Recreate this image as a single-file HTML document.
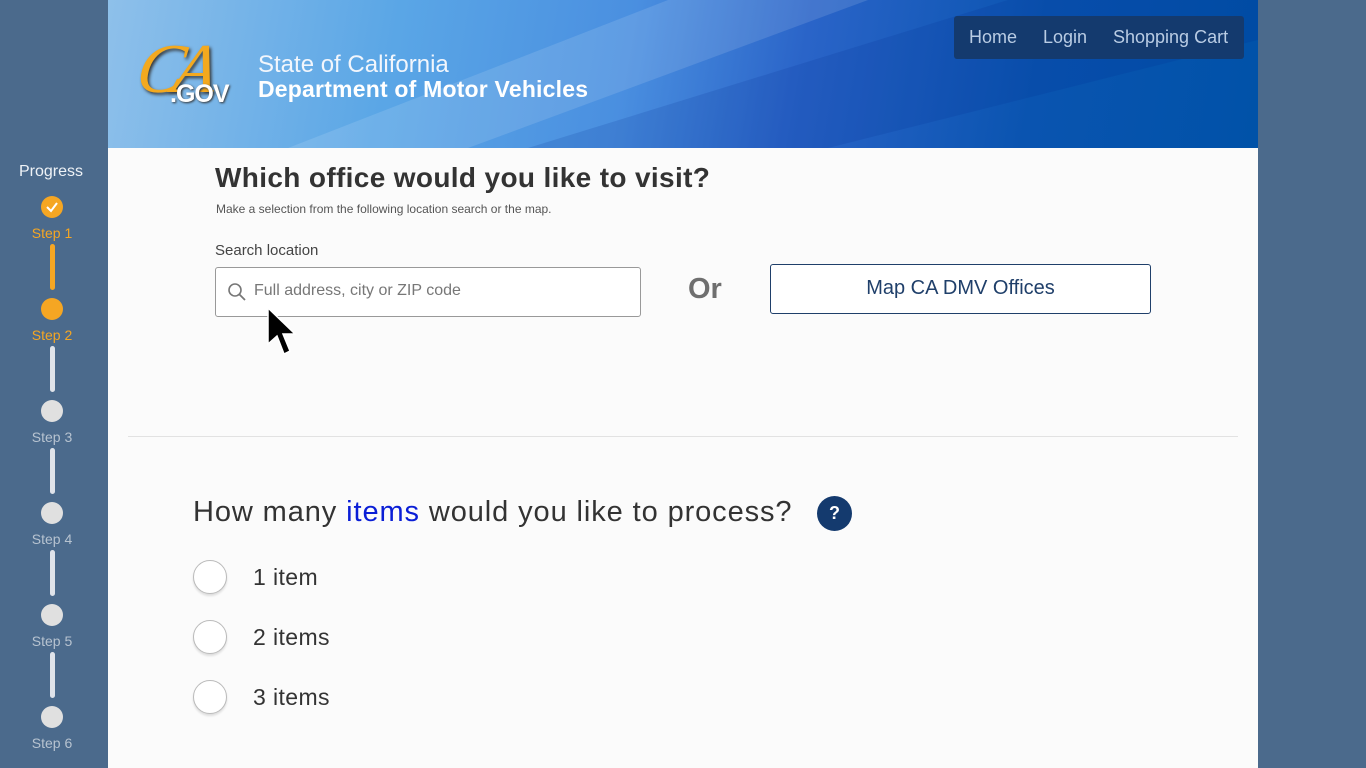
<!DOCTYPE html>
<html><head><meta charset="utf-8">
<style>
*{margin:0;padding:0;box-sizing:border-box}
body{width:1366px;height:768px;overflow:hidden;background:#4b6a8c;font-family:"Liberation Sans",Arial,sans-serif;position:relative}
.abs{position:absolute}
#main{left:108px;top:0;width:1150px;height:768px;background:#fbfbfb}
#hdr{left:108px;top:0;width:1150px;height:148px;overflow:hidden;
background:linear-gradient(100deg,#8ec0ea 0%,#5aa6e6 25%,#4a8fe0 45%,#2a64c8 60%,#0a54b0 80%,#0052a8 100%)}
.step{position:absolute;left:52px;transform:translateX(-50%);text-align:center;font-size:14px;color:#b7c3d0;white-space:nowrap}
.dot{position:absolute;left:41px;width:22px;height:22px;border-radius:50%;background:#e0e0e0}
.ln{position:absolute;left:50px;width:5px;height:46px;border-radius:3px;background:#dfe3ea}
.radio{position:absolute;left:193px;width:34px;height:34px;border-radius:50%;border:1.5px solid #bbb;background:#fff;box-shadow:0 2px 2px rgba(0,0,0,.12)}
.rl{position:absolute;left:253px;font-size:23px;letter-spacing:0.4px;color:#333}
</style></head><body>
<div id="main" class="abs"></div>
<div id="hdr" class="abs">
 <svg class="abs" style="left:0;top:0" width="1150" height="148">
  <polygon points="180,148 560,0 760,0 360,148" fill="rgba(255,255,255,0.12)"/>
  <polygon points="420,148 900,0 1150,0 1150,40 720,148" fill="rgba(0,40,140,0.15)"/>
 </svg>
 <div class="abs" style="left:30px;top:30px;font-family:'Liberation Serif',serif;font-style:italic;font-size:70px;color:#f3a91f;text-shadow:2px 2px 3px #333;letter-spacing:-10px;transform:skewX(-10deg)">CA</div>
 <div class="abs" style="left:62px;top:80px;font-size:25px;color:#fff;font-weight:bold;text-shadow:1px 1px 2px #333;letter-spacing:-1px">.GOV</div>
 <div class="abs" style="left:150px;top:51px;font-size:24px;color:#f2f6fc">State of California</div>
 <div class="abs" style="left:150px;top:76px;font-size:23px;letter-spacing:0.2px;color:#fff;font-weight:bold">Department of Motor Vehicles</div>
 <div class="abs" style="left:846px;top:16px;width:290px;height:43px;background:#143a6e;border-radius:3px;color:#b9cce4;font-size:18px">
  <span class="abs" style="left:15px;top:11px">Home</span>
  <span class="abs" style="left:89px;top:11px">Login</span>
  <span class="abs" style="left:159px;top:11px">Shopping Cart</span>
 </div>
</div>

<div class="abs" style="left:19px;top:163px;font-size:16px;color:#eef2f6">Progress</div>
<div class="dot" style="top:196px;background:#f5a623"></div>
<svg class="abs" style="left:41px;top:196px" width="22" height="22"><path d="M6 11 L10 15 L16 7" stroke="#fff" stroke-width="2" fill="none"/></svg>
<div class="step" style="top:225px;color:#f5a623">Step 1</div>
<div class="ln" style="top:244px;background:#f5a623"></div>
<div class="dot" style="top:298px;background:#f5a623"></div>
<div class="step" style="top:327px;color:#f5a623">Step 2</div>
<div class="ln" style="top:346px"></div>
<div class="dot" style="top:400px"></div>
<div class="step" style="top:429px">Step 3</div>
<div class="ln" style="top:448px"></div>
<div class="dot" style="top:502px"></div>
<div class="step" style="top:531px">Step 4</div>
<div class="ln" style="top:550px"></div>
<div class="dot" style="top:604px"></div>
<div class="step" style="top:633px">Step 5</div>
<div class="ln" style="top:652px"></div>
<div class="dot" style="top:706px"></div>
<div class="step" style="top:735px">Step 6</div>

<div class="abs" style="left:215px;top:162px;font-size:28px;letter-spacing:0.35px;font-weight:bold;color:#333">Which office would you like to visit?</div>
<div class="abs" style="left:216px;top:202px;font-size:12px;color:#555">Make a selection from the following location search or the map.</div>
<div class="abs" style="left:215px;top:242px;font-size:15px;color:#444">Search location</div>
<div class="abs" style="left:215px;top:267px;width:426px;height:50px;border:1px solid #999;border-radius:3px;background:#fff">
 <svg class="abs" style="left:11px;top:14px" width="20" height="20"><circle cx="8" cy="8" r="6" stroke="#777" stroke-width="1.6" fill="none"/><path d="M12.5 12.5 L18 18" stroke="#777" stroke-width="1.8"/></svg>
 <span class="abs" style="left:38px;top:14px;font-size:16px;color:#777">Full address, city or ZIP code</span>
</div>
<div class="abs" style="left:688px;top:273px;font-size:29px;font-weight:bold;color:#6f6f6f">Or</div>
<div class="abs" style="left:770px;top:264px;width:381px;height:50px;border:1.5px solid #1f3f6a;border-radius:3px;background:#fff;text-align:center;line-height:47px;font-size:20px;color:#1f3f6a">Map CA DMV Offices</div>
<svg class="abs" style="left:266px;top:306px" width="36" height="52"><path d="M2 2 L2 38 L11 30 L18 48 L24 45 L17 28 L29 28 Z" fill="#000" stroke="#fff" stroke-width="1.5"/></svg>

<div class="abs" style="left:128px;top:436px;width:1110px;height:1px;background:#e2e2e2"></div>
<div class="abs" style="left:193px;top:496px;font-size:29px;letter-spacing:0.9px;color:#333;white-space:nowrap">How many <span style="color:#0a1ed6">items</span> would you like to process?</div>
<div class="abs" style="left:817px;top:496px;width:35px;height:35px;border-radius:50%;background:#143a6e;color:#fff;text-align:center;line-height:35px;font-size:18px;font-weight:bold">?</div>
<div class="radio" style="top:560px"></div><div class="rl" style="top:564px">1 item</div>
<div class="radio" style="top:620px"></div><div class="rl" style="top:624px">2 items</div>
<div class="radio" style="top:680px"></div><div class="rl" style="top:684px">3 items</div>
</body></html>
